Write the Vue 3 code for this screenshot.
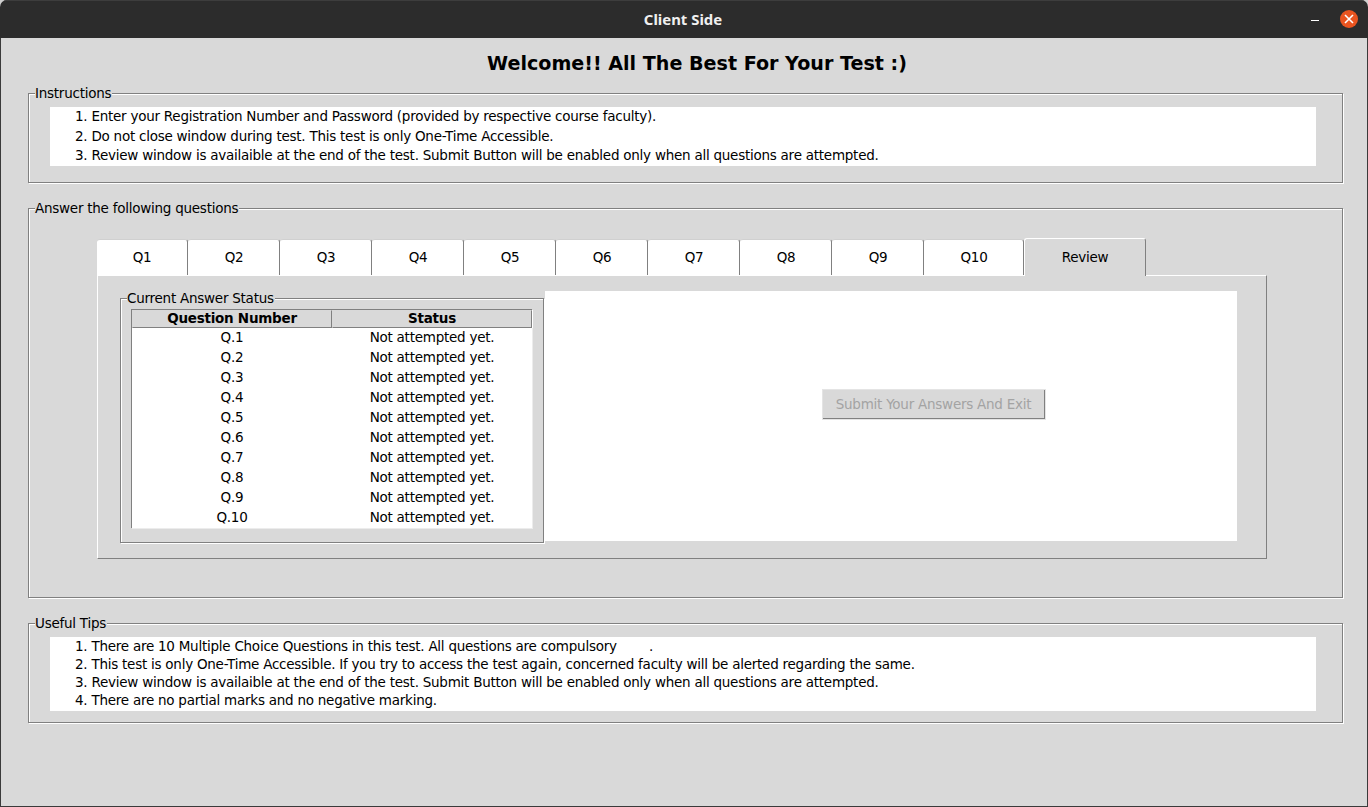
<script setup>
const instructions = [
  '1. Enter your Registration Number and Password (provided by respective course faculty).',
  '2. Do not close window during test. This test is only One-Time Accessible.',
  '3. Review window is availaible at the end of the test. Submit Button will be enabled only when all questions are attempted.'
]

const tips = [
  '1. There are 10 Multiple Choice Questions in this test. All questions are compulsory        .',
  '2. This test is only One-Time Accessible. If you try to access the test again, concerned faculty will be alerted regarding the same.',
  '3. Review window is availaible at the end of the test. Submit Button will be enabled only when all questions are attempted.',
  '4. There are no partial marks and no negative marking.'
]

const tabs = ['Q1', 'Q2', 'Q3', 'Q4', 'Q5', 'Q6', 'Q7', 'Q8', 'Q9', 'Q10']

const rows = tabs.map((t, i) => 'Q.' + (i + 1))
</script>

<template>
  <div class="window">
    <header class="titlebar">
      <span class="title">Client Side</span>
      <div class="controls">
        <span class="minimize"></span>
        <span class="close">
          <svg width="10" height="10" viewBox="0 0 10 10">
            <path d="M1 1 L9 9 M9 1 L1 9" stroke="#fff" stroke-width="1.6" fill="none" />
          </svg>
        </span>
      </div>
    </header>

    <main class="content">
      <h1>Welcome!! All The Best For Your Test :)</h1>

      <section class="group instructions">
        <span class="legend">Instructions</span>
        <div class="textbox">
          <p v-for="line in instructions" :key="line">{{ line }}</p>
        </div>
      </section>

      <section class="group questions">
        <span class="legend">Answer the following questions</span>
        <div class="notebook">
          <div class="tabs">
            <div v-for="t in tabs" :key="t" class="tab" :class="{ wide: t === 'Q10' }">{{ t }}</div>
            <div class="tab review">Review</div>
          </div>
          <div class="pane">
            <div class="group status">
              <span class="legend">Current Answer Status</span>
              <div class="table">
                <div class="th">Question Number</div>
                <div class="th">Status</div>
                <template v-for="r in rows" :key="r">
                  <div class="td">{{ r }}</div>
                  <div class="td">Not attempted yet.</div>
                </template>
              </div>
            </div>
            <div class="submit-area">
              <button class="submit" disabled>Submit Your Answers And Exit</button>
            </div>
          </div>
        </div>
      </section>

      <section class="group useful">
        <span class="legend">Useful Tips</span>
        <div class="textbox tips">
          <p v-for="line in tips" :key="line">{{ line }}</p>
        </div>
      </section>
    </main>
  </div>
</template>

<style>
html, body {
  margin: 0;
  background: #cfcfcf;
}
</style>

<style scoped>
.window {
  width: 1368px;
  height: 807px;
  box-sizing: border-box;
  display: flex;
  flex-direction: column;
  overflow: hidden;
  border-radius: 7px 7px 0 0;
  background: #d9d9d9;
  font-family: "DejaVu Sans", sans-serif;
  font-size: 13.5px;
  letter-spacing: -0.25px;
  color: #000;
}

.titlebar {
  height: 38px;
  flex: none;
  background: #2c2c2c;
  border-top: 1px solid #3d3d3d;
  box-sizing: border-box;
  display: flex;
  align-items: center;
  justify-content: center;
  position: relative;
  padding-bottom: 2px;
}

.title {
  color: #f0f0f0;
  font-family: "Noto Sans", sans-serif;
  font-weight: 700;
  font-size: 14.9px;
  letter-spacing: 0;
  margin-right: 2px;
}

.controls {
  position: absolute;
  right: 10px;
  top: 9px;
  display: flex;
  align-items: center;
  gap: 21px;
}

.minimize {
  width: 8px;
  height: 1px;
  background: #fff;
  margin-top: 3px;
}

.close {
  width: 18px;
  height: 18px;
  border-radius: 50%;
  background: #e95420;
  display: flex;
  align-items: center;
  justify-content: center;
}

.content {
  flex: 1;
  border: 1px solid #3a3a3a;
  border-top: none;
  padding: 0 24px 0 27px;
}

h1 {
  margin: 0;
  height: 55px;
  line-height: 52px;
  padding-left: 23px;
  text-align: center;
  font-size: 19.1px;
  font-weight: 700;
  letter-spacing: 0;
}

.group {
  position: relative;
  border: 1px solid #808080;
  box-shadow: inset 1px 1px 0 #fff, 1px 1px 0 #fff;
}

.legend {
  position: absolute;
  top: -10px;
  left: 6px;
  line-height: 18px;
  padding-right: 1px;
  background: #d9d9d9;
}

.instructions {
  height: 88px;
  margin-bottom: 25px;
}

.textbox {
  margin: 13px 26px 0 21px;
  height: 59px;
  background: #fff;
  padding-left: 25px;
}

.textbox p {
  margin: 0;
  line-height: 19.5px;
  white-space: pre;
}

.textbox.tips {
  height: 74px;
}

.textbox.tips p {
  line-height: 18px;
}

.questions {
  height: 390px;
  margin-bottom: 25px;
  padding: 29px 0 0 68px;
  box-sizing: border-box;
}

.notebook {
  width: 1170px;
}

.tabs {
  display: flex;
  height: 37px;
  align-items: flex-start;
}

.tab {
  width: 92px;
  height: 36px;
  margin-top: 1px;
  padding: 0 0 2px 1px;
  box-sizing: border-box;
  background: #fff;
  border-right: 1px solid #808080;
  border-top: 1px solid #d0d0d0;
  border-radius: 3px 3px 0 0;
  display: flex;
  align-items: center;
  justify-content: center;
}

.tab:first-child {
  width: 91px;
  padding-left: 0;
}

.tab.wide {
  width: 100px;
}

.tab.review {
  position: relative;
  z-index: 1;
  width: 122px;
  height: 38px;
  margin-top: 0;
  padding: 0 0 2px;
  background: #d9d9d9;
  border-top: 1px solid #fff;
  border-left: 1px solid #fff;
}

.pane {
  height: 284px;
  box-sizing: border-box;
  border: 1px solid #808080;
  border-top-color: #fff;
  border-left-color: #fff;
  padding: 15px 29px 0 22px;
  display: flex;
  align-items: flex-start;
}

.status {
  width: 424px;
  height: 245px;
  flex: none;
  box-sizing: border-box;
  margin: 7px 1px 0 0;
  padding: 10px 0 0 10px;
}

.table {
  display: grid;
  grid-template-columns: 200px 200px;
  grid-template-rows: 18px repeat(10, 20px);
  width: 400px;
  background: #fff;
  border-top: 1px solid #808080;
  border-left: 1px solid #808080;
  box-shadow: 1px 1px 0 #ececec;
}

.th {
  box-sizing: border-box;
  background: #d9d9d9;
  border: 1px solid #d9d9d9;
  border-right-color: #808080;
  border-bottom-color: #808080;
  box-shadow: 1px 0 0 #fff;
  text-align: center;
  font-weight: 700;
  line-height: 15px;
}

.td {
  text-align: center;
  line-height: 19px;
}

.submit-area {
  flex: 1;
  height: 250px;
  box-sizing: border-box;
  padding: 0 0 23px 85px;
  background: #fff;
  display: flex;
  align-items: center;
  justify-content: center;
}

.submit {
  width: 224px;
  height: 31px;
  box-sizing: border-box;
  background: #d9d9d9;
  border: 1px solid #e4e4e4;
  box-shadow: inset -1px -1px 0 #808080;
  color: #a3a3a3;
  font-family: "DejaVu Sans", sans-serif;
  font-size: 13.5px;
  letter-spacing: -0.25px;
  padding: 0 0 2px;
}

.useful {
  height: 98px;
}
</style>
